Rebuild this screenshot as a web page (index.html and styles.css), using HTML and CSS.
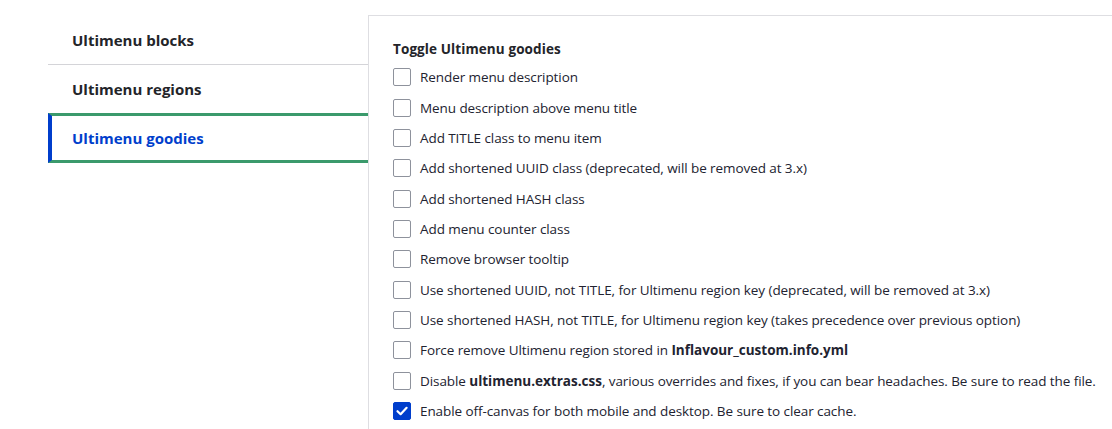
FILE: index.html
```html
<!DOCTYPE html>
<html>
<head>
<meta charset="utf-8">
<link rel="stylesheet" href="styles.css">
</head>
<body>
<div class="layout">
  <nav class="tabs">
    <div class="tab">Ultimenu blocks</div>
    <div class="tab">Ultimenu regions</div>
    <div class="tab active">Ultimenu goodies</div>
  </nav>
  <section class="panel">
    <h3 class="legend">Toggle Ultimenu goodies</h3>
    <ul class="options">
      <li class="option"><span class="box"></span><span class="label">Render menu description</span></li>
      <li class="option"><span class="box"></span><span class="label">Menu description above menu title</span></li>
      <li class="option"><span class="box"></span><span class="label">Add TITLE class to menu item</span></li>
      <li class="option"><span class="box"></span><span class="label">Add shortened UUID class (deprecated, will be removed at 3.x)</span></li>
      <li class="option"><span class="box"></span><span class="label">Add shortened HASH class</span></li>
      <li class="option"><span class="box"></span><span class="label">Add menu counter class</span></li>
      <li class="option"><span class="box"></span><span class="label">Remove browser tooltip</span></li>
      <li class="option"><span class="box"></span><span class="label">Use shortened UUID, not TITLE, for Ultimenu region key (deprecated, will be removed at 3.x)</span></li>
      <li class="option"><span class="box"></span><span class="label">Use shortened HASH, not TITLE, for Ultimenu region key (takes precedence over previous option)</span></li>
      <li class="option"><span class="box"></span><span class="label">Force remove Ultimenu region stored in <b>Inflavour_custom.info.yml</b></span></li>
      <li class="option"><span class="box"></span><span class="label">Disable <b>ultimenu.extras.css</b>, various overrides and fixes, if you can bear headaches. Be sure to read the file.</span></li>
      <li class="option"><span class="box checked"><svg viewBox="0 0 18 18" width="18" height="18"><path d="M4.5 9.2 L7.6 12.2 L13.6 5.8" fill="none" stroke="#fff" stroke-width="2.2" stroke-linecap="round" stroke-linejoin="round"/></svg></span><span class="label">Enable off-canvas for both mobile and desktop. Be sure to clear cache.</span></li>
    </ul>
  </section>
</div>
</body>
</html>
```
FILE: styles.css
```css
html, body {
  margin: 0;
  padding: 0;
  background: #fff;
}
body {
  font-family: "Open Sans", "Noto Sans", "Liberation Sans", sans-serif;
  color: #222330;
}
.layout {
  display: flex;
  padding: 15px 0 0 48px;
}
.tabs {
  width: 320px;
  flex: none;
  display: flex;
  flex-direction: column;
  padding-top: 1px;
}
.tab {
  height: 49px;
  box-sizing: border-box;
  display: flex;
  align-items: center;
  padding-left: 24px;
  font-size: 15px;
  font-weight: 700;
  color: #232429;
  border-bottom: 1px solid #d4d4d8;
}
.tab.active {
  height: 50px;
  margin-top: -1px;
  color: #003ecc;
  border-top: 3px solid #3b9a6c;
  border-bottom: 3px solid #3b9a6c;
  border-left: 4px solid #003ecc;
  padding-left: 20px;
}
.panel {
  flex: 1;
  border-top: 1px solid #dedee2;
  border-left: 1px solid #dedee2;
  padding: 23px 0 0 24px;
  min-height: 400px;
}
.legend {
  margin: 0 0 3px;
  font-size: 13.5px;
  line-height: 20px;
  font-weight: 700;
  color: #232429;
  letter-spacing: 0.1px;
}
.options {
  list-style: none;
  margin: 0;
  padding: 0;
}
.option {
  height: 30.36px;
  display: flex;
  align-items: center;
  gap: 9px;
  font-size: 13.5px;
  white-space: nowrap;
}
.label {
  letter-spacing: -0.08px;
}
.label b {
  font-weight: 700;
  letter-spacing: 0;
}
.box {
  width: 18px;
  height: 18px;
  box-sizing: border-box;
  border: 1px solid #8e929c;
  border-radius: 2px;
  flex: none;
  display: flex;
}
.box.checked {
  background: #003ecc;
  border-color: #003ecc;
}
.box svg {
  margin: -1px;
}
```
